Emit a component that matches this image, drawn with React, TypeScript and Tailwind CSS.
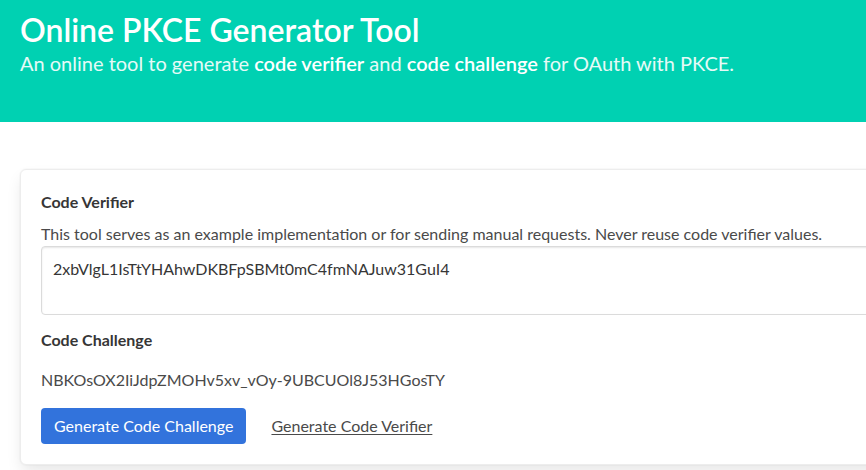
export default function App() {
  const font = { fontFamily: 'Lato, "Noto Sans", sans-serif' };
  return (
    <div className="w-[866px] h-[470px] overflow-hidden bg-white" style={font}>
      <header className="h-[122px] bg-[#00d1b2] px-5 pt-[12px]">
        <h1 className="text-[32px] font-semibold leading-[1.125] text-white">Online PKCE Generator Tool</h1>
        <p className="mt-[3px] text-[20px] leading-[1.25] text-white/90">
          An online tool to generate <strong className="font-semibold text-white">code verifier</strong> and{' '}
          <strong className="font-semibold text-white">code challenge</strong> for OAuth with PKCE.
        </p>
      </header>
      <section className="pl-5 pt-[47px]">
        <div className="w-[900px] rounded-md bg-white p-5 shadow-[0_0.5em_1em_-0.125em_rgba(10,10,10,0.1),0_0_0_1px_rgba(10,10,10,0.02)] border border-[#ededed]">
          <label className="block text-base font-bold leading-6 text-[#363636]">Code Verifier</label>
          <p className="mt-[8px] text-base leading-6 text-[#4a4a4a]">
            This tool serves as an example implementation or for sending manual requests. Never reuse code verifier values.
          </p>
          <div className="h-[69px] rounded border border-[#dbdbdb] px-[11px] py-[10px] text-base leading-6 text-[#363636] shadow-[inset_0_1px_2px_rgba(10,10,10,0.1)]">
            2xbVlgL1IsTtYHAhwDKBFpSBMt0mC4fmNAJuw31GuI4
          </div>
          <label className="mt-[13px] block text-base font-bold leading-6 text-[#363636]">Code Challenge</label>
          <p className="mt-[16px] text-base leading-6 text-[#4a4a4a]">NBKOsOX2IiJdpZMOHv5xv_vOy-9UBCUOl8J53HGosTY</p>
          <div className="mt-[16px] flex items-center gap-[25px]">
            <button className="h-9 rounded bg-[#3273dc] px-[13px] text-base text-white">Generate Code Challenge</button>
            <a className="text-base text-[#4a4a4a] underline underline-offset-2">Generate Code Verifier</a>
          </div>
        </div>
      </section>
    </div>
  );
}
